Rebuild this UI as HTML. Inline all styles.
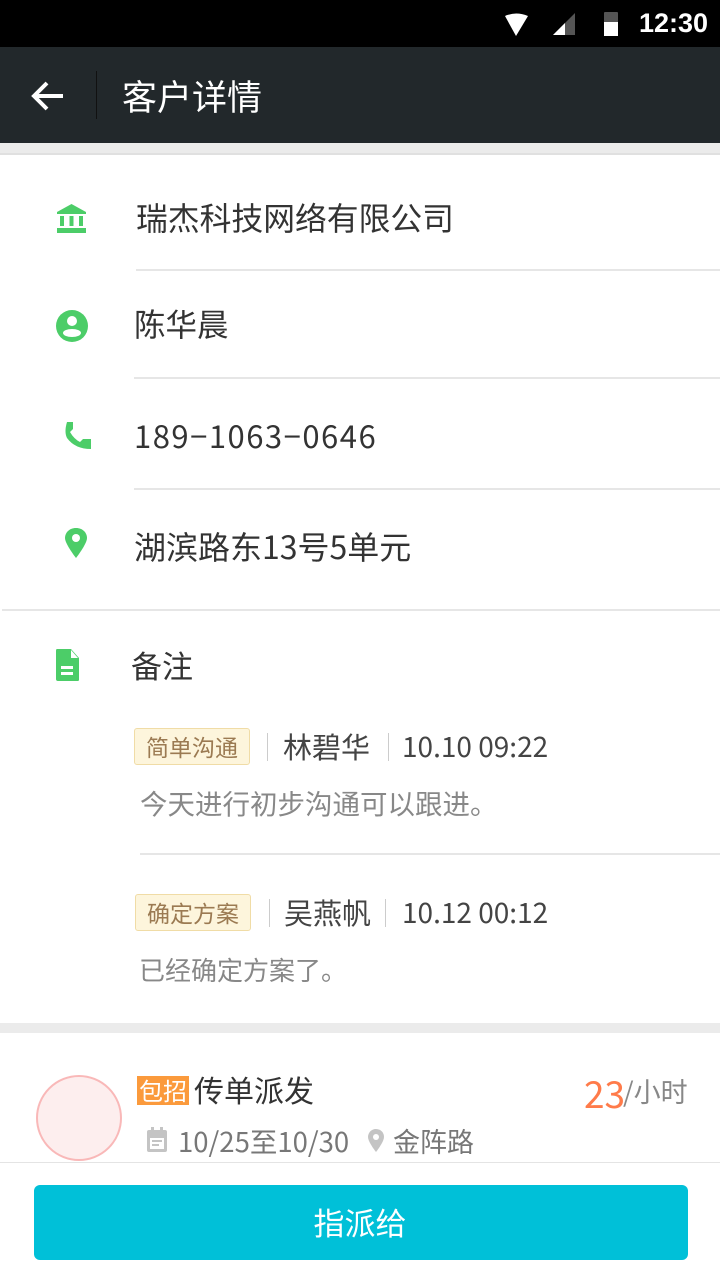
<!DOCTYPE html>
<html><head><meta charset="utf-8"><style>
*{margin:0;padding:0;box-sizing:border-box}
body{width:720px;height:1281px;position:relative;overflow:hidden;background:#fff;font-family:"Noto Sans CJK SC","Liberation Sans",sans-serif}
.a{position:absolute}
.t{position:absolute;line-height:1;white-space:nowrap}
.line{position:absolute;height:2px;background:#e6e6e6}
.tag{position:absolute;height:37px;border:1px solid #f0dca6;background:#fdf5dc;border-radius:3px;color:#9b7a52;font-size:23px;line-height:35px;padding:0 11px}
.sep{position:absolute;width:1px;height:28px;background:#ccc}
</style></head><body>
<div class="a" style="left:0;top:0;width:720px;height:47px;background:#000"></div>
<svg class="a" style="left:500px;top:8px" width="210" height="32">
<path d="M5 8 Q16 3 28 8 L16 28 Z" fill="#fff"/>
<path d="M53 27 L75 5 L75 27 Z" fill="#555"/><path d="M53 27 L65 15 L65 27 Z" fill="#fff"/>
<rect x="104" y="4" width="14" height="24" rx="1" fill="#555"/><rect x="104" y="14" width="14" height="14" fill="#fff"/>
</svg>
<div class="t" style="left:639px;top:10px;color:#fff;font-size:27px;font-weight:bold;font-family:'Liberation Sans',sans-serif">12:30</div>
<div class="a" style="left:0;top:47px;width:720px;height:96px;background:#22282b"></div>
<svg class="a" style="left:30px;top:79px" width="36" height="34"><path d="M33 17 H5 M17 4 L4 17 L17 30" stroke="#fff" stroke-width="4" fill="none"/></svg>
<div class="a" style="left:96px;top:71px;width:1px;height:48px;background:#111"></div>
<div class="t" style="left:122px;top:78px;color:#fff;font-size:35px">客户详情</div>
<div class="a" style="left:0;top:143px;width:720px;height:11px;background:#ebebeb"></div>
<div class="a" style="left:0;top:153px;width:720px;height:2px;background:#e0e0e0"></div>

<svg class="a" style="left:56px;top:203px" width="32" height="32" fill="#4ccd68"><path d="M1 9 L15.5 1 L30 9 V11 H1Z"/><rect x="4" y="13" width="4" height="10"/><rect x="13.5" y="13" width="4" height="10"/><rect x="23" y="13" width="4" height="10"/><rect x="1" y="25" width="29" height="5"/></svg>
<div class="t" style="left:136px;top:202px;color:#333;font-size:31.8px">瑞杰科技网络有限公司</div>
<div class="line" style="left:136px;top:269px;width:584px"></div>

<svg class="a" style="left:55px;top:309px" width="34" height="34"><circle cx="17" cy="17" r="16" fill="#4ccd68"/><circle cx="17" cy="12" r="5" fill="#fff"/><ellipse cx="17" cy="24" rx="9" ry="4" fill="#fff"/></svg>
<div class="t" style="left:134px;top:308px;color:#333;font-size:31.5px">陈华晨</div>
<div class="line" style="left:134px;top:377px;width:586px"></div>

<svg class="a" style="left:63px;top:422px" width="30" height="30"><path d="M4 0 H10 V7 L7 10 Q11 17 17 20 L20 17 H28 V27 Q12 27 4 16 Q1 10 4 0Z" fill="#4ccd68"/></svg>
<div class="t" style="left:134px;top:419px;color:#333;font-size:31px;letter-spacing:1.5px">189−1063−0646</div>
<div class="line" style="left:134px;top:488px;width:586px"></div>

<svg class="a" style="left:64px;top:527px" width="24" height="34"><path d="M12 1 C5 1 1 6 1 11 C1 17 12 31 12 31 C12 31 23 17 23 11 C23 6 19 1 12 1Z" fill="#4ccd68"/><circle cx="12" cy="11" r="4" fill="#fff"/></svg>
<div class="t" style="left:134px;top:530px;color:#333;font-size:32px">湖滨路东13号5单元</div>
<div class="line" style="left:2px;top:609px;width:718px"></div>

<svg class="a" style="left:55px;top:649px" width="26" height="33"><path d="M2 0 H16 L24 9 V31 Q24 32 22 32 H3 Q1 32 1 30 V2 Q1 0 2 0Z" fill="#4ccd68"/><path d="M16 1 V9 H23Z" fill="#fff"/><rect x="6" y="17" width="12" height="3" fill="#fff"/><rect x="6" y="23" width="12" height="3" fill="#fff"/></svg>
<div class="t" style="left:131px;top:649px;color:#333;font-size:31px">备注</div>

<div class="tag" style="left:134px;top:728px">简单沟通</div>
<div class="sep" style="left:267px;top:733px"></div>
<div class="t" style="left:283px;top:732px;color:#444;font-size:29px">林碧华</div>
<div class="sep" style="left:388px;top:733px"></div>
<div class="t" style="left:402px;top:732px;color:#444;font-size:28px">10.10 09:22</div>
<div class="t" style="left:140px;top:789px;color:#888;font-size:27.5px">今天进行初步沟通可以跟进。</div>
<div class="line" style="left:140px;top:853px;width:580px"></div>

<div class="tag" style="left:135px;top:894px">确定方案</div>
<div class="sep" style="left:269px;top:899px"></div>
<div class="t" style="left:284px;top:898px;color:#444;font-size:29px">吴燕帆</div>
<div class="sep" style="left:385px;top:899px"></div>
<div class="t" style="left:402px;top:898px;color:#444;font-size:28px">10.12 00:12</div>
<div class="t" style="left:139px;top:957px;color:#888;font-size:26px">已经确定方案了。</div>

<div class="a" style="left:0;top:1023px;width:720px;height:10px;background:#ebebeb"></div>

<div class="a" style="left:36px;top:1075px;width:86px;height:86px;border-radius:50%;background:#fdeeee;border:2px solid #f9b8b8"></div>
<div class="a" style="left:137px;top:1076px;width:52px;height:29px;background:#fb9a3c"></div>
<div class="t" style="left:139px;top:1078px;color:#fff;font-size:24px">包招</div>
<div class="t" style="left:194px;top:1074px;color:#333;font-size:30px">传单派发</div>
<div class="t" style="left:584px;top:1074px;color:#ff7b4a;font-size:37px">23</div>
<div class="t" style="left:623px;top:1077px;color:#888;font-size:27px">/小时</div>
<svg class="a" style="left:146px;top:1127px" width="22" height="26"><rect x="1" y="3" width="20" height="22" rx="2" fill="#c4c4c4"/><rect x="5" y="0" width="3" height="4" fill="#c4c4c4"/><rect x="14" y="0" width="3" height="4" fill="#c4c4c4"/><rect x="4" y="11" width="14" height="11" fill="#fff"/><rect x="6" y="13" width="10" height="2" fill="#c4c4c4"/><rect x="6" y="17" width="7" height="2" fill="#c4c4c4"/></svg>
<div class="t" style="left:178px;top:1127px;color:#777;font-size:27.5px">10/25至10/30</div>
<svg class="a" style="left:367px;top:1128px" width="18" height="26"><path d="M9 1 C4 1 1 5 1 9 C1 14 9 24 9 24 C9 24 17 14 17 9 C17 5 14 1 9 1Z" fill="#c4c4c4"/><circle cx="9" cy="9" r="3" fill="#fff"/></svg>
<div class="t" style="left:393px;top:1127px;color:#777;font-size:27px">金阵路</div>

<div class="a" style="left:0;top:1162px;width:720px;height:119px;background:#fff;border-top:1px solid #e4e4e4"></div>
<div class="a" style="left:34px;top:1185px;width:654px;height:75px;background:#00c0d8;border-radius:6px"></div>
<div class="t" style="left:0;top:1206px;width:720px;text-align:center;color:#fff;font-size:31px">指派给</div>
</body></html>
